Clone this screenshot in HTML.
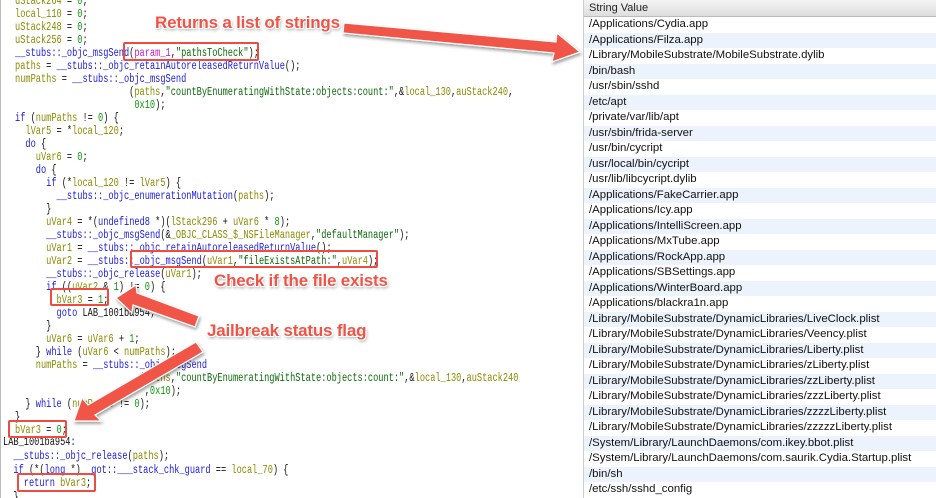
<!DOCTYPE html>
<html style="overflow:hidden;width:936px;height:498px"><head><meta charset="utf-8"><style>
*{margin:0;padding:0;box-sizing:border-box}
body{width:936px;height:498px;overflow:hidden;background:#fff;position:relative;font-family:"Liberation Sans",sans-serif}
#code{position:absolute;left:0;top:0;width:580px;height:498px;border-left:1px solid #bbb;overflow:hidden}
pre{position:absolute;left:14px;top:-5px;font-family:"Liberation Mono",monospace;font-size:11.5px;line-height:13.0px;transform:scaleX(0.752);transform-origin:0 0;color:#111;white-space:pre}
.v{color:#8a8a00}.f{color:#1a1ae0}.k{color:#1a1ae0}.n{color:#0a9a0a}.s{color:#0a6a0a}.p{color:#c020c0}
#list{position:absolute;left:583px;top:0;width:353px;height:498px;border-left:1px solid #ccc;overflow:hidden}
.hd{height:17px;background:linear-gradient(#f4f4f4,#dedede);border-bottom:1px solid #bbb;font-size:11px;padding:2px 5px;color:#222}
.r{height:15.5px;font-size:11.4px;line-height:15.5px;padding-left:5px;color:#111;white-space:nowrap}
.box{position:absolute;border:2px solid #ee4c40;border-radius:2px}
.lbl{position:absolute;font-weight:bold;font-size:17px;color:#f05446;text-shadow:0 0 1px #fff,1px 1px 0 #fff,-1px -1px 0 #fff,1px -1px 0 #fff,-1px 1px 0 #fff,1px 2px 3px rgba(0,0,0,.45);white-space:nowrap;letter-spacing:-0.2px}
svg{position:absolute;left:0;top:0}
</style></head><body>
<div id="code"><pre><span class="v">uStack264</span> = <span class="n">0</span>;
<span class="v">local_110</span> = <span class="n">0</span>;
<span class="v">uStack248</span> = <span class="n">0</span>;
<span class="v">uStack256</span> = <span class="n">0</span>;
<span class="f">__stubs::_objc_msgSend</span>(<span class="p">param_1</span>,<span class="s">"pathsToCheck"</span>);
<span class="v">paths</span> = <span class="f">__stubs::_objc_retainAutoreleasedReturnValue</span>();
<span class="v">numPaths</span> = <span class="f">__stubs::_objc_msgSend</span>
                      (<span class="v">paths</span>,<span class="s">"countByEnumeratingWithState:objects:count:"</span>,&amp;<span class="v">local_130</span>,<span class="v">auStack240</span>,
                       <span class="n">0x10</span>);
<span class="k">if</span> (<span class="v">numPaths</span> != <span class="n">0</span>) {
  <span class="v">lVar5</span> = *<span class="v">local_120</span>;
  <span class="k">do</span> {
    <span class="v">uVar6</span> = <span class="n">0</span>;
    <span class="k">do</span> {
      <span class="k">if</span> (*<span class="v">local_120</span> != <span class="v">lVar5</span>) {
        <span class="f">__stubs::_objc_enumerationMutation</span>(<span class="v">paths</span>);
      }
      <span class="v">uVar4</span> = *(<span class="f">undefined8</span> *)(<span class="v">lStack296</span> + <span class="v">uVar6</span> * <span class="n">8</span>);
      <span class="f">__stubs::_objc_msgSend</span>(&amp;<span class="v">_OBJC_CLASS_$_NSFileManager</span>,<span class="s">"defaultManager"</span>);
      <span class="v">uVar1</span> = <span class="f">__stubs::_objc_retainAutoreleasedReturnValue</span>();
      <span class="v">uVar2</span> = <span class="f">__stubs::_objc_msgSend</span>(<span class="v">uVar1</span>,<span class="s">"fileExistsAtPath:"</span>,<span class="v">uVar4</span>);
      <span class="f">__stubs::_objc_release</span>(<span class="v">uVar1</span>);
      <span class="k">if</span> ((<span class="v">uVar2</span> &amp; <span class="n">1</span>) != <span class="n">0</span>) {
        <span class="v">bVar3</span> = <span class="n">1</span>;
        <span class="k">goto</span> LAB_1001ba954;
      }
      <span class="v">uVar6</span> = <span class="v">uVar6</span> + <span class="n">1</span>;
    } <span class="k">while</span> (<span class="v">uVar6</span> &lt; <span class="v">numPaths</span>);
    <span class="v">numPaths</span> = <span class="f">__stubs::_objc_msgSend</span>
                        (<span class="v">paths</span>,<span class="s">"countByEnumeratingWithState:objects:count:"</span>,&amp;<span class="v">local_130</span>,<span class="v">auStack240</span>
                         ,<span class="n">0x10</span>);
  } <span class="k">while</span> (<span class="v">numPaths</span> != <span class="n">0</span>);
}
<span class="v">bVar3</span> = <span class="n">0</span>;
</pre>
<pre style="left:2px;top:436px;line-height:13.8px">LAB_1001ba954:
  <span class="f">__stubs::_objc_release</span>(<span class="v">paths</span>);
  <span class="k">if</span> (*(<span class="k">long</span> *)<span class="f">__got::___stack_chk_guard</span> == <span class="v">local_70</span>) {
    <span class="k">return</span> <span class="v">bVar3</span>;
  }</pre>
</div>
<div id="list">
<div class="hd">String Value</div>
<div class="r" style="background:#fff">/Applications/Cydia.app</div>
<div class="r" style="background:#edf3fc">/Applications/Filza.app</div>
<div class="r" style="background:#fff">/Library/MobileSubstrate/MobileSubstrate.dylib</div>
<div class="r" style="background:#edf3fc">/bin/bash</div>
<div class="r" style="background:#fff">/usr/sbin/sshd</div>
<div class="r" style="background:#edf3fc">/etc/apt</div>
<div class="r" style="background:#fff">/private/var/lib/apt</div>
<div class="r" style="background:#edf3fc">/usr/sbin/frida-server</div>
<div class="r" style="background:#fff">/usr/bin/cycript</div>
<div class="r" style="background:#edf3fc">/usr/local/bin/cycript</div>
<div class="r" style="background:#fff">/usr/lib/libcycript.dylib</div>
<div class="r" style="background:#edf3fc">/Applications/FakeCarrier.app</div>
<div class="r" style="background:#fff">/Applications/Icy.app</div>
<div class="r" style="background:#edf3fc">/Applications/IntelliScreen.app</div>
<div class="r" style="background:#fff">/Applications/MxTube.app</div>
<div class="r" style="background:#edf3fc">/Applications/RockApp.app</div>
<div class="r" style="background:#fff">/Applications/SBSettings.app</div>
<div class="r" style="background:#edf3fc">/Applications/WinterBoard.app</div>
<div class="r" style="background:#fff">/Applications/blackra1n.app</div>
<div class="r" style="background:#edf3fc">/Library/MobileSubstrate/DynamicLibraries/LiveClock.plist</div>
<div class="r" style="background:#fff">/Library/MobileSubstrate/DynamicLibraries/Veency.plist</div>
<div class="r" style="background:#edf3fc">/Library/MobileSubstrate/DynamicLibraries/Liberty.plist</div>
<div class="r" style="background:#fff">/Library/MobileSubstrate/DynamicLibraries/zLiberty.plist</div>
<div class="r" style="background:#edf3fc">/Library/MobileSubstrate/DynamicLibraries/zzLiberty.plist</div>
<div class="r" style="background:#fff">/Library/MobileSubstrate/DynamicLibraries/zzzLiberty.plist</div>
<div class="r" style="background:#edf3fc">/Library/MobileSubstrate/DynamicLibraries/zzzzLiberty.plist</div>
<div class="r" style="background:#fff">/Library/MobileSubstrate/DynamicLibraries/zzzzzLiberty.plist</div>
<div class="r" style="background:#edf3fc">/System/Library/LaunchDaemons/com.ikey.bbot.plist</div>
<div class="r" style="background:#fff">/System/Library/LaunchDaemons/com.saurik.Cydia.Startup.plist</div>
<div class="r" style="background:#edf3fc">/bin/sh</div>
<div class="r" style="background:#fff">/etc/ssh/sshd_config</div>
<div class="r" style="background:#edf3fc"></div>
</div>
<div class="box" style="left:123px;top:42px;width:136px;height:19px"></div>
<div class="box" style="left:130px;top:250px;width:248px;height:18px"></div>
<div class="box" style="left:50px;top:288px;width:59px;height:18px"></div>
<div class="box" style="left:8px;top:420px;width:59px;height:18px"></div>
<div class="box" style="left:17px;top:473px;width:79px;height:19px"></div>
<svg width="936" height="498" viewBox="0 0 936 498">
<defs><filter id="sh" x="-20%" y="-20%" width="140%" height="140%"><feDropShadow dx="1" dy="2" stdDeviation="1.5" flood-color="#000" flood-opacity=".4"/></filter></defs>
<g fill="#f05446" stroke="#fff" stroke-width="1.2" filter="url(#sh)">
<polygon points="344,23 556,42 557,33 580,52 552,62 554,53 343,33"/>
<polygon points="116,298 136,285 137,293 199,316 195,327 133,305 132,313"/>
<polygon points="74,421 82,398 88,405 196,342 203,352 95,415 101,421"/>
</g>
</svg>
<div class="lbl" style="left:155px;top:13px">Returns a list of strings</div>
<div class="lbl" style="left:214px;top:271px">Check if the file exists</div>
<div class="lbl" style="left:207px;top:321px">Jailbreak status flag</div>
</body></html>
